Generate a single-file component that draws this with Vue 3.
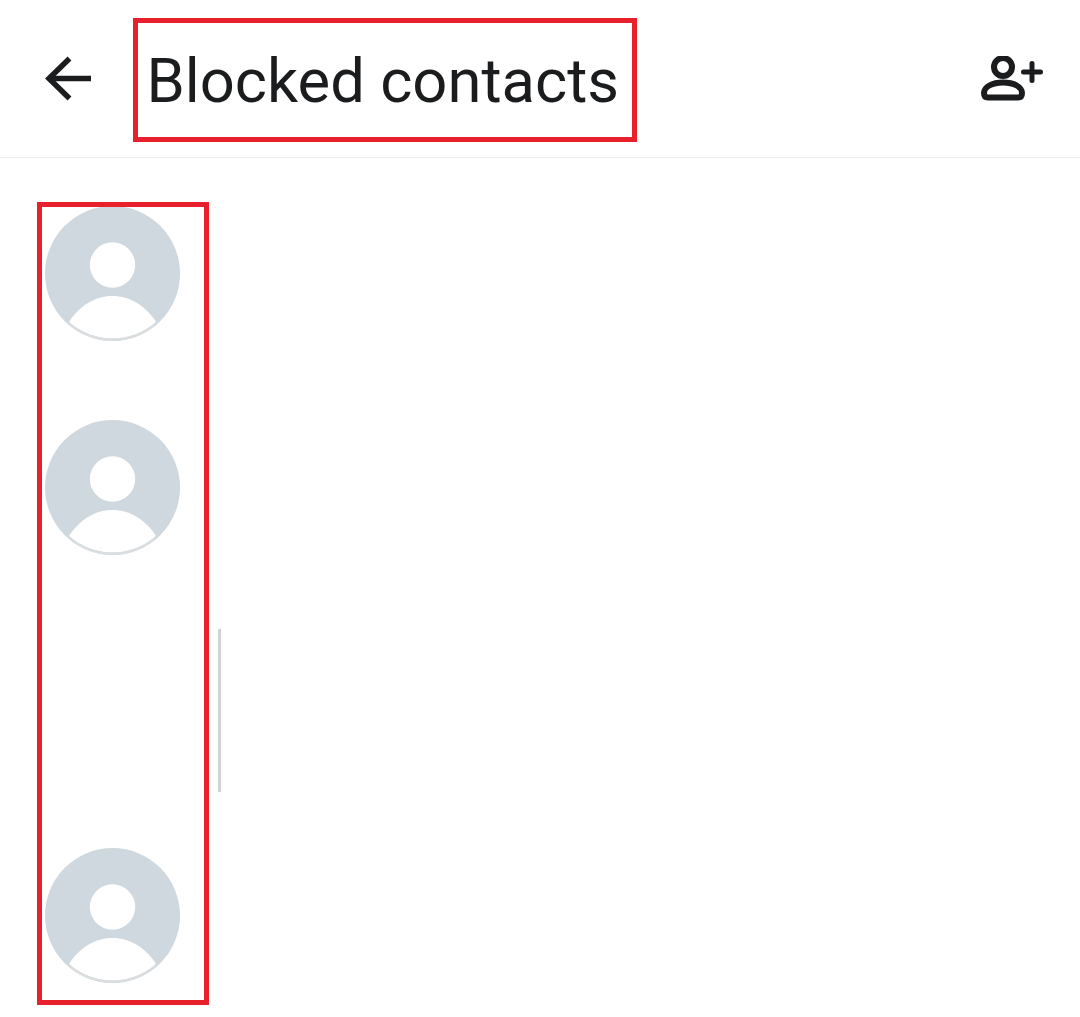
<template>
  <div class="page">
    <header class="top-bar">
      <button class="icon-btn back-btn" type="button" aria-label="Back">
        <svg width="46" height="46" viewBox="0 0 46 46" fill="none" stroke="#1a1c1e" stroke-width="5.500">
          <path d="M46 22.500H4" />
          <path d="M24.500 2.500L4 22.500l20.500 20" />
        </svg>
      </button>
      <h1 class="title">Blocked contacts</h1>
      <button class="icon-btn add-btn" type="button" aria-label="Add contact">
        <svg width="64" height="46" viewBox="0 0 64 46" fill="none" stroke="#1a1c1e" stroke-width="6">
          <circle cx="22" cy="11" r="9" />
          <path d="M3 37C3 31 11 26.500 22 26.500S41 31 41 37c0 3-1.500 4.500-4 4.500H7c-2.500 0-4-1.500-4-4.500z" />
          <path d="M42.500 16h17M51 7.500v17" stroke-width="5" stroke-linecap="round" />
        </svg>
      </button>
    </header>

    <main class="content">
      <ul class="contact-list">
        <li v-for="contact in contacts" :key="contact.id" class="contact-row">
          <svg v-if="contact.loaded" class="avatar" width="135" height="135" viewBox="0 0 135 135">
            <circle cx="67.500" cy="67.500" r="67.500" fill="#cfd8de" />
            <path d="M24 116C34 100 50 90 67.500 90S101 100 111 116A65.600 65.600 0 0 1 24 116z" fill="#fff" />
            <path d="M24 116A65.600 65.600 0 0 0 111 116L108.700 121A67.500 67.500 0 0 1 26.300 121z" fill="#dadee0" />
            <circle cx="67.500" cy="59" r="22.700" fill="#fff" />
          </svg>
        </li>
      </ul>
      <div class="scroll-thumb"></div>
    </main>
  </div>
</template>

<script setup>
const contacts = [
  { id: 1, loaded: true },
  { id: 2, loaded: true },
  { id: 3, loaded: false },
  { id: 4, loaded: true }
]
</script>

<style>
html,
body {
  background: #fff;
  overflow: hidden;
}
</style>

<style scoped>
.page {
  width: 1080px;
  height: 1017px;
  background: #fff;
  font-family: Roboto, "Liberation Sans", sans-serif;
}

.top-bar {
  display: flex;
  align-items: center;
  height: 158px;
  box-sizing: border-box;
  padding-left: 45px;
  border-bottom: 1px solid #eeeeee;
}

.icon-btn {
  display: flex;
  padding: 0;
  border: none;
  background: none;
}

.back-btn {
  margin-top: 1px;
}

.title {
  margin: 3px 0 0 42px;
  padding: 0 0 0 8.500px;
  width: 504px;
  height: 124px;
  box-sizing: border-box;
  border: 5px solid #e8202c;
  font-size: 61.500px;
  font-weight: 400;
  line-height: 117px;
  color: #1a1c1e;
  white-space: nowrap;
}

.add-btn {
  margin-left: auto;
  margin-right: 35px;
  margin-top: 1px;
}

.content {
  position: relative;
  padding: 44px 0 0 37px;
}

.contact-list {
  width: 172px;
  height: 803px;
  box-sizing: border-box;
  margin: 0;
  padding: 0 0 0 3px;
  border: 5px solid #e8202c;
  list-style: none;
  overflow: hidden;
}

.contact-row {
  height: 214px;
}

.contact-row:first-child {
  margin-top: -1px;
}

.avatar {
  display: block;
}

.scroll-thumb {
  position: absolute;
  left: 218px;
  top: 471px;
  width: 3px;
  height: 163px;
  background: #d2d2d2;
}
</style>
